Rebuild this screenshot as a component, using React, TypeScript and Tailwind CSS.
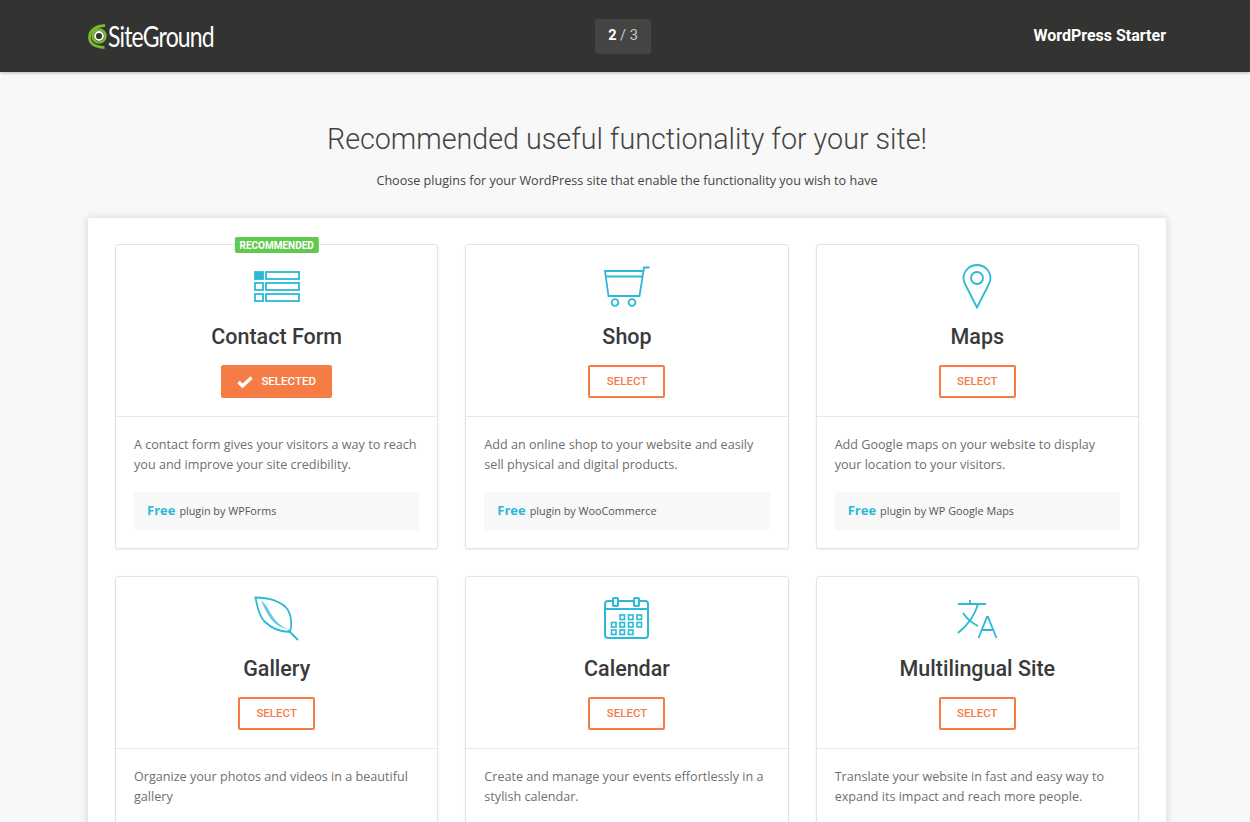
import type { ReactNode } from "react";

const stroke = "#2bb9d6";

function FormIcon() {
  return (
    <svg width="46" height="31" viewBox="0 0 46 31" fill="none" stroke={stroke} strokeWidth="1.800">
      <rect x="1" y="1" width="8" height="7" fill={stroke} />
      <rect x="1" y="12" width="8" height="7" />
      <rect x="1" y="23" width="8" height="7" />
      <rect x="12" y="1" width="33" height="7" />
      <rect x="12" y="12" width="33" height="7" />
      <rect x="12" y="23" width="33" height="7" />
    </svg>
  );
}

function CartIcon() {
  return (
    <svg width="46" height="41" viewBox="0 0 46 41" fill="none" stroke={stroke} strokeWidth="1.800">
      <path d="M45.500 1.500H40L35.500 30H4.500L1 5h38.800" />
      <path d="M2 10.500h36.500" />
      <circle cx="11" cy="36.500" r="3.400" />
      <circle cx="28" cy="36.500" r="3.400" />
    </svg>
  );
}

function PinIcon() {
  return (
    <svg width="30" height="45" viewBox="0 0 30 45" fill="none" stroke={stroke} strokeWidth="1.800">
      <path d="M15 43.500 3.800 21.500C2.300 18.800 1.500 16.800 1.500 14.500a13.500 13.500 0 0 1 27 0c0 2.300-.8 4.300-2.300 7Z" />
      <circle cx="15" cy="14" r="6" />
    </svg>
  );
}

function LeafIcon() {
  return (
    <svg width="46" height="45" viewBox="0 0 46 45" fill="none" stroke={stroke} strokeWidth="1.800">
      <path d="M1.500 1.500C14 1.500 28 5 34 14c4 7 4 16 2 22-9 0-19-4-26-11C4 18 3 9 1.500 1.500Z" />
      <path d="m34 34 10 10" />
      <path d="M7 4c6 5 8 11 12 17 4 6 9 10 15 12-8-1-15-6-19-13C11 14 9 9 7 4Z" fill={stroke} fillOpacity="0.75" stroke="none" />
    </svg>
  );
}

function CalendarIcon() {
  const cells = [
    [18, 20], [26.500, 20], [35, 20],
    [9.500, 27.500], [18, 27.500], [26.500, 27.500], [35, 27.500],
    [9.500, 35], [18, 35], [26.500, 35],
  ];
  return (
    <svg width="45" height="42" viewBox="0 0 45 42" fill="none" stroke={stroke} strokeWidth="2">
      <rect x="1" y="4" width="43" height="37" rx="3" />
      <path d="M1 12h43" />
      <rect x="9" y="1" width="5" height="8" rx="1" fill="#fff" />
      <rect x="30" y="1" width="5" height="8" rx="1" fill="#fff" />
      {cells.map(([x, y]) => (
        <rect key={`${x}-${y}`} x={x - 2} y={y - 2} width="4.500" height="4.500" strokeWidth="1.600" />
      ))}
    </svg>
  );
}

function TranslateIcon() {
  return (
    <svg width="41" height="41" viewBox="0 0 41 41" fill="none" stroke={stroke} strokeWidth="1.800">
      <path d="M1 6h28M13 2v4" />
      <path d="M21 6C18 17 11 27 1 35" />
      <path d="M6 15c4 6 9 10 15 13" />
      <path d="m21.500 40 8.500-21h1l8.500 21M24 32h13" />
    </svg>
  );
}

type Plugin = {
  title: string;
  icon: ReactNode;
  desc: string;
  by?: string;
  selected?: boolean;
  recommended?: boolean;
};

const plugins: Plugin[] = [
  { title: "Contact Form", icon: <FormIcon />, desc: "A contact form gives your visitors a way to reach you and improve your site credibility.", by: "WPForms", selected: true, recommended: true },
  { title: "Shop", icon: <CartIcon />, desc: "Add an online shop to your website and easily sell physical and digital products.", by: "WooCommerce" },
  { title: "Maps", icon: <PinIcon />, desc: "Add Google maps on your website to display your location to your visitors.", by: "WP Google Maps" },
  { title: "Gallery", icon: <LeafIcon />, desc: "Organize your photos and videos in a beautiful gallery" },
  { title: "Calendar", icon: <CalendarIcon />, desc: "Create and manage your events effortlessly in a stylish calendar." },
  { title: "Multilingual Site", icon: <TranslateIcon />, desc: "Translate your website in fast and easy way to expand its impact and reach more people." },
];

function PluginCard({ plugin }: { plugin: Plugin }) {
  return (
    <div className="relative bg-white border border-[#e4e4e4] rounded-[3px] h-[305px] flex flex-col shadow-[0_1px_2px_rgba(0,0,0,0.08)]">
      {plugin.recommended && (
        <div className="absolute -top-[8px] left-1/2 -translate-x-1/2 bg-[#62c94f] text-white rounded-[2px] h-[16px] px-[5px] pt-px flex items-center text-[10px] font-bold font-['Roboto',sans-serif] leading-none">
          RECOMMENDED
        </div>
      )}
      <div className="h-[172px] border-b border-[#e8e8e8] flex flex-col items-center shrink-0">
        <div className="h-[52px] mt-[15px] flex items-center justify-center">{plugin.icon}</div>
        <h2 className="mt-[9px] text-[21.5px] leading-[32px] font-medium text-[#3a3a3a] font-['Roboto',sans-serif]">
          {plugin.title}
        </h2>
        {plugin.selected ? (
          <button className="mt-[12px] w-[111px] h-[33px] pt-px rounded-[2px] bg-[#f67c45] text-white flex items-center justify-center gap-[8px] text-[11.500px] font-medium font-['Roboto',sans-serif]">
            <svg width="16" height="12" viewBox="0 0 16 12" fill="none" stroke="#fff" strokeWidth="3.400">
              <path d="m1.500 6 4 4 9-8.500" />
            </svg>
            SELECTED
          </button>
        ) : (
          <button className="mt-[12px] w-[77px] h-[33px] pt-px rounded-[2px] border-2 border-[#f67c45] text-[#f67c45] text-[11.500px] font-medium font-['Roboto',sans-serif]">
            SELECT
          </button>
        )}
      </div>
      <div className="flex-1 px-[18px] pt-[18px] font-['Open_Sans',sans-serif]">
        <p className="text-[12.6px] leading-[20px] text-[#6f6f6f] h-[57px]">{plugin.desc}</p>
        {plugin.by && (
          <div className="bg-[#f8f8f8] h-[38px] px-[13px] flex items-center">
            <span className="text-[13px] font-bold text-[#2bb9d6] mr-[4px]">Free</span>
            <span className="text-[10.8px] text-[#555]">plugin by {plugin.by}</span>
          </div>
        )}
      </div>
    </div>
  );
}

export default function App() {
  return (
    <div className="h-[822px] overflow-hidden bg-[#f8f8f8] flex flex-col">
      <header className="h-[72px] shrink-0 bg-[#333332] shadow-[0_1px_3px_rgba(0,0,0,0.25)] pl-[88px] pr-[84px] flex items-center justify-between">
        <div className="flex items-center gap-[1px] w-[192px]">
          <svg width="19" height="25" viewBox="0 0 19 25" fill="none" className="shrink-0">
            <path d="M17 1.500C8 2 1.500 6 1.500 13c0 6 5 10 15 10.500" stroke="#79b82f" strokeWidth="2.800" />
            <circle cx="11" cy="12" r="6.500" stroke="#79b82f" strokeWidth="2.500" />
            <circle cx="11" cy="12" r="4" stroke="#fff" strokeWidth="1.800" />
          </svg>
          <span className="text-white text-[28px] leading-none font-normal font-['Lato',sans-serif] tracking-[-1px] origin-left scale-x-[0.82]">SiteGround</span>
        </div>
        <div className="w-[56px] h-[35px] rounded-[3px] bg-[#444443] flex items-center justify-center text-[14.500px] font-['Roboto',sans-serif] text-[#c8c8c8]">
          <b className="text-white font-bold">2</b>&nbsp;/&nbsp;3
        </div>
        <div className="w-[200px] text-right text-white text-[16px] font-bold font-['Roboto',sans-serif]">WordPress Starter</div>
      </header>

      <main className="flex-1 flex flex-col items-center pl-[4px]">
        <h1 className="mt-[47px] text-[28.7px] leading-[40px] font-light text-[#444] font-['Roboto',sans-serif]">
          Recommended useful functionality for your site!
        </h1>
        <p className="mt-[12px] text-[12.6px] leading-[20px] text-[#444] font-['Open_Sans',sans-serif]">
          Choose plugins for your WordPress site that enable the functionality you wish to have
        </p>
        <div className="mt-[27px] w-[1078px] bg-white rounded-[2px] shadow-[0_0_8px_rgba(0,0,0,0.16)] px-[27px] pt-[26px] pb-[27px] grid grid-cols-3 gap-[27px]">
          {plugins.map((plugin) => (
            <PluginCard key={plugin.title} plugin={plugin} />
          ))}
        </div>
      </main>
    </div>
  );
}
